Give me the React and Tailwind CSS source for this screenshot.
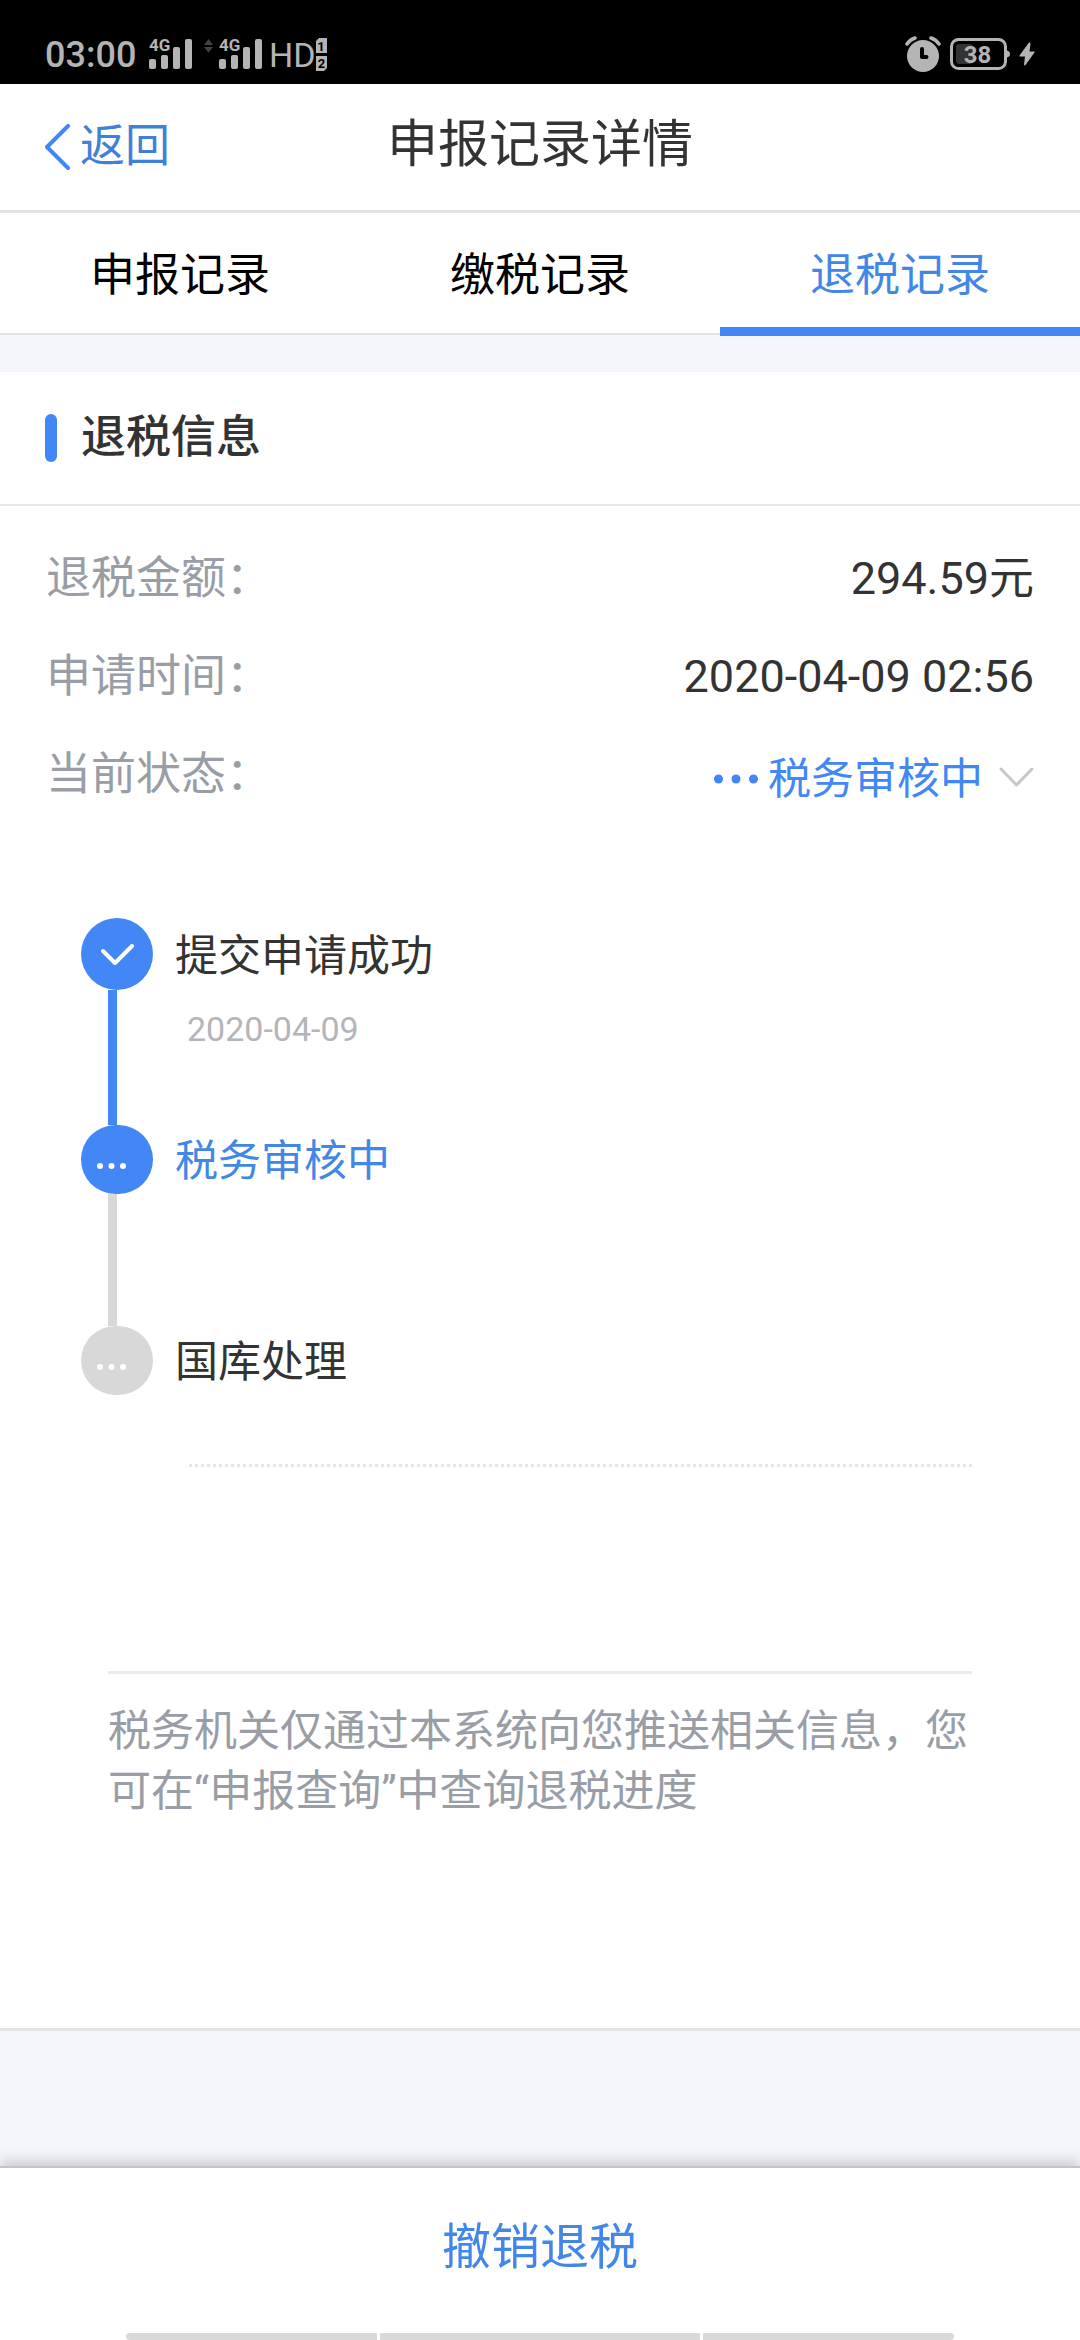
import { useState } from "react"

const tabs = ["申报记录", "缴税记录", "退税记录"]

const steps = [
  { title: "提交申请成功", date: "2020-04-09", state: "done" },
  { title: "税务审核中", state: "current" },
  { title: "国库处理", state: "pending" },
]

const SignalIcon = () => (
  <svg width="44" height="44" viewBox="0 -6 44 44" fill="#b4b4b4" aria-hidden="true">
    <text x="0" y="12" fontSize="17" fontWeight="700">4G</text>
    <rect x="0" y="20" width="7" height="10" rx="2" />
    <rect x="12" y="16" width="7" height="14" rx="2" />
    <rect x="24" y="8" width="7" height="22" rx="2" />
    <rect x="36" y="0" width="7" height="30" rx="2" />
  </svg>
)

const StatusBar = () => (
  <div className="flex h-[84px] items-end justify-between bg-black px-[45px] pb-[7px] text-[#b4b4b4]">
    <div className="flex items-center">
      <span className="w-[104px] text-[36px] leading-[34px] font-medium">03:00</span>
      <SignalIcon />
      <svg className="mr-[6px] ml-[11px]" width="9" height="44" viewBox="0 -6 9 44" fill="#444" aria-hidden="true">
        <path d="M0 6L4.500 0L9 6ZM0 8H9L4.500 13.500Z" />
      </svg>
      <SignalIcon />
      <span className="ml-[6px] text-[34px] leading-[34px]">HD</span>
      <svg width="11" height="44" viewBox="0 -6 11 44" fill="#b4b4b4" aria-hidden="true">
        <path d="M3 -1H11V14H0V2Z" />
        <path d="M0 17H11V29L8 32H0Z" />
        <text x="5" y="11.500" fontSize="13" fontWeight="700" fill="#000" textAnchor="middle">1</text>
        <text x="5.500" y="29" fontSize="13" fontWeight="700" fill="#000" textAnchor="middle">2</text>
      </svg>
    </div>
    <div className="flex h-[46px] items-center">
      <svg width="36" height="37" viewBox="0 0 36 37" fill="#b4b4b4" aria-hidden="true">
        <circle cx="18" cy="20" r="16" />
        <path d="M2 8Q5 3.500 10 2M34 8Q31 3.500 26 2" fill="none" stroke="#b4b4b4" strokeWidth="3.500" strokeLinecap="round" />
        <path d="M17 13V21H21.500" fill="none" stroke="#000" strokeWidth="4" strokeLinecap="round" strokeLinejoin="round" />
      </svg>
      <svg className="ml-[9px]" width="60" height="34" viewBox="0 0 60 34" aria-hidden="true">
        <rect x="1.500" y="2.500" width="54" height="29" rx="7" fill="none" stroke="#b4b4b4" strokeWidth="3" />
        <rect x="6" y="7" width="17" height="20" rx="3" fill="#333" />
        <path d="M57 13.500Q60 14.500 60 17T57 20.500Z" fill="#b4b4b4" />
        <text x="27.500" y="25.500" fontSize="24" fontWeight="700" fill="#b4b4b4" textAnchor="middle">38</text>
      </svg>
      <svg className="ml-[9px]" width="16" height="24" viewBox="0 0 16 24" fill="#b4b4b4" aria-hidden="true">
        <path d="M10 0.500L0.500 13.500Q0 14.500 1 14.500H6L5 22.500Q5.500 24 6.500 23L15.500 10.500Q16 9.500 15 9.500H10.500L11.500 1.500Q11 0 10 0.500Z" />
      </svg>
    </div>
  </div>
)

const StepMarker = ({ state }) => {
  if (state === "done") {
    return (
      <div className="flex size-[72px] items-center justify-center rounded-full bg-[#4287f5]">
        <svg width="34" height="24" viewBox="0 0 34 24" fill="none" stroke="#fff" strokeWidth="4" strokeLinecap="round" strokeLinejoin="round" aria-hidden="true">
          <path d="M3 9L15 21L32 4" />
        </svg>
      </div>
    )
  }

  return (
    <div
      className={`flex h-[69px] w-[72px] items-center rounded-full pt-3 pl-4 ${
        state === "current" ? "bg-[#4287f5]" : "bg-[#d8d8d8]"
      }`}
    >
      <svg width="30" height="6" viewBox="0 0 30 6" fill="#fff" aria-hidden="true">
        <circle cx="3" cy="3" r="3" />
        <circle cx="14.500" cy="3" r="3" />
        <circle cx="26" cy="3" r="3" />
      </svg>
    </div>
  )
}

const Step = ({ step, last }) => {
  const done = step.state === "done"

  return (
    <li className={`flex gap-[22px] ${last ? "" : done ? "min-h-[207px]" : "min-h-[201px]"}`}>
      <div className="flex flex-col">
        <StepMarker state={step.state} />
        {!last && <div className={`ml-[27px] w-[9px] flex-1 ${done ? "bg-[#4287f5]" : "bg-[#d8d8d8]"}`}></div>}
      </div>
      <div className={done ? "pt-2" : "pt-[6px]"}>
        <p className={`text-[43px] leading-[60px] ${step.state === "current" ? "text-[#4287e8]" : "text-[#333]"}`}>
          {step.title}
        </p>
        {step.date && <p className="mt-[22px] pl-3 text-[34px] leading-[42px] text-[#b4b5ba]">{step.date}</p>}
      </div>
    </li>
  )
}

const App = () => {
  const [activeTab, setActiveTab] = useState("退税记录")
  const [expanded, setExpanded] = useState(true)

  return (
    <div className="flex min-h-screen flex-col bg-[#f4f6fb] font-[Roboto,'Noto_Sans_CJK_SC',sans-serif] text-[#333]">
      <StatusBar />

      <header className="grid grid-cols-3 items-end border-b-[3px] border-[#e1e3e5] bg-white px-[45px] pb-[33px]">
        <button className="flex items-center gap-[10px] justify-self-start text-[45px] leading-[60px] text-[#3f80d8]">
          <svg width="25" height="46" viewBox="0 0 25 46" fill="none" stroke="#4287f5" strokeWidth="4" strokeLinecap="round" strokeLinejoin="round" aria-hidden="true">
            <path d="M23 2L2 23L23 44" />
          </svg>
          返回
        </button>
        <h1 className="pt-[31px] pb-[2px] text-center text-[51px] leading-[60px] whitespace-nowrap">申报记录详情</h1>
      </header>

      <nav className="flex border-b-2 border-[#e3e3e3] bg-white">
        {tabs.map((tab) => (
          <button
            key={tab}
            onClick={() => setActiveTab(tab)}
            className={`-mb-[3px] flex-1 border-b-[9px] pt-[33px] pb-[21px] text-[45px] leading-[60px] ${
              activeTab === tab ? "border-[#4287f5] text-[#4287e8]" : "border-transparent text-black"
            }`}
          >
            {tab}
          </button>
        ))}
      </nav>

      <main className="mt-[37px] border-b-[3px] border-[#e1e3e5] bg-white pb-[207px]">
        <div className="flex items-center gap-6 border-b-2 border-[#e8e8e8] px-[45px] py-9">
          <div className="h-12 w-3 rounded-full bg-[#4287f5]"></div>
          <h2 className="text-[45px] leading-[60px] font-medium">退税信息</h2>
        </div>

        {/* Refund details */}
        <dl className="flex flex-col gap-[38px] px-[46px] pt-[43px] text-[45px] leading-[60px]">
          <div className="flex justify-between">
            <dt className="text-[#999da6]">退税金额：</dt>
            <dd>294.59元</dd>
          </div>
          <div className="flex justify-between">
            <dt className="text-[#999da6]">申请时间：</dt>
            <dd>2020-04-09 02:56</dd>
          </div>
          <div className="flex justify-between">
            <dt className="text-[#999da6]">当前状态：</dt>
            <dd className="pt-1">
              <button
                onClick={() => setExpanded(!expanded)}
                aria-expanded={expanded}
                className="flex items-center text-[43px] text-[#4287f5]"
              >
                <svg className="mr-[10px]" width="44" height="10" viewBox="0 0 44 10" fill="#4287f5" aria-hidden="true">
                  <circle cx="4.500" cy="5" r="4.500" />
                  <circle cx="22" cy="5" r="4.500" />
                  <circle cx="39.500" cy="5" r="4.500" />
                </svg>
                税务审核中
                <svg className="ml-4" width="35" height="24" viewBox="0 0 35 24" fill="none" stroke="#c8c8c8" strokeWidth="3" strokeLinecap="round" strokeLinejoin="round" aria-hidden="true">
                  <path d="M2 2L17.500 18L33 2" />
                </svg>
              </button>
            </dd>
          </div>
        </dl>

        {/* Progress timeline */}
        {expanded && (
          <ol className="pt-[109px] pl-[81px]">
            {steps.map((step, i) => (
              <Step key={step.title} step={step} last={i === steps.length - 1} />
            ))}
          </ol>
        )}

        <div className="mt-[69px] mr-[108px] ml-[189px] border-t-[3px] border-dotted border-[#e6e6e6]"></div>

        <p className="mx-[108px] mt-[204px] border-t-[3px] border-[#ebebeb] pt-[27px] text-[43px] leading-[60px] text-[#999da6]">
          税务机关仅通过本系统向您推送相关信息，您可在“申报查询”中查询退税进度
        </p>
      </main>

      <footer className="mt-auto border-t-2 border-[#c4c4c6] bg-white shadow-[0_-6px_12px_rgba(0,0,0,0.16)]">
        <button className="w-full pt-[50px] pb-[55px] text-[49px] leading-[60px] text-[#4287e8]">撤销退税</button>
        <div className="mx-[126px] flex h-[7px] gap-[3px]">
          <div className="flex-[251] rounded-l-full bg-[#d9d9d9]"></div>
          <div className="flex-[320] bg-[#d9d9d9]"></div>
          <div className="flex-[251] rounded-r-full bg-[#d9d9d9]"></div>
        </div>
      </footer>
    </div>
  )
}

export default App
